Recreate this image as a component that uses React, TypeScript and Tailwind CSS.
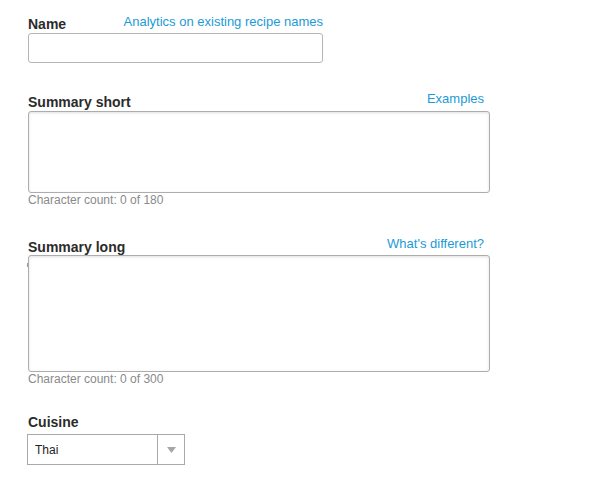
import React from "react";

const font = { fontFamily: '"Liberation Sans", Arial, Helvetica, sans-serif' };

function CountText({ max }: { max: number }) {
  return (
    <div className="text-[12px] leading-[14px] text-[#8a8a8a]">
      Character count: 0 of {max}
    </div>
  );
}

export default function App() {
  return (
    <div
      className="w-[600px] h-[479px] bg-white pl-[28px] pt-[16px] text-[#333]"
      style={font}
    >
      {/* Name */}
      <div className="w-[295px]">
        <div className="flex h-[16px] items-end justify-between">
          <label className="text-[14px] leading-[16px] font-bold text-[#2b2b2b]">Name</label>
          <a className="mb-[2px] text-[13px] leading-[16px] text-[#1b9ad6]" href="#">
            Analytics on existing recipe names
          </a>
        </div>
        <input
          type="text"
          className="mt-[1px] block w-[295px] h-[30px] rounded-[3px] border border-[#b5b5b5] bg-white outline-none"
        />
      </div>

      {/* Summary short */}
      <div className="mt-[31px] w-[462px]">
        <div className="flex h-[16px] items-end justify-between pr-[6px]">
          <label className="text-[14px] leading-[16px] font-bold text-[#2b2b2b]">Summary short</label>
          <a className="mb-[3px] text-[13px] leading-[16px] text-[#1b9ad6]" href="#">
            Examples
          </a>
        </div>
        <textarea
          className="mt-[1px] block w-[462px] h-[82px] resize-none rounded-[3px] border border-[#adadad] bg-white outline-none shadow-[inset_0_1px_3px_rgba(0,0,0,0.12)]"
        />
        <CountText max={180} />
      </div>

      {/* Summary long */}
      <div className="mt-[32px] w-[462px]">
        <div className="flex h-[16px] items-end justify-between pr-[6px]">
          <label className="text-[14px] leading-[16px] font-bold text-[#2b2b2b]">Summary long</label>
          <a className="mb-[3px] text-[13px] leading-[16px] text-[#1b9ad6]" href="#">
            What's different?
          </a>
        </div>
        <div className="relative">
          <textarea
            className="block w-[462px] h-[117px] resize-none rounded-[3px] border border-[#adadad] bg-white outline-none shadow-[inset_0_1px_3px_rgba(0,0,0,0.12)]"
          />
          <span className="absolute left-[-1px] top-[8px] w-[1px] h-[4px] bg-[#999]" />
        </div>
        <CountText max={300} />
      </div>

      {/* Cuisine */}
      <div className="mt-[28px] -ml-[1px]">
        <label className="block pl-[1px] text-[14px] leading-[16px] font-bold text-[#2b2b2b]">Cuisine</label>
        <div className="mt-[4px] flex w-[158px] h-[31px] border border-[#a9a9a9] bg-white">
          <div className="flex flex-1 items-center pl-[7px] text-[12px] text-[#222]">Thai</div>
          <div className="flex w-[27px] items-center justify-center border-l border-[#a9a9a9]">
            <svg width="9" height="6" viewBox="0 0 9 6">
              <path d="M0 0 L9 0 L4.5 6 Z" fill="#a6a6a6" />
            </svg>
          </div>
        </div>
      </div>
    </div>
  );
}
